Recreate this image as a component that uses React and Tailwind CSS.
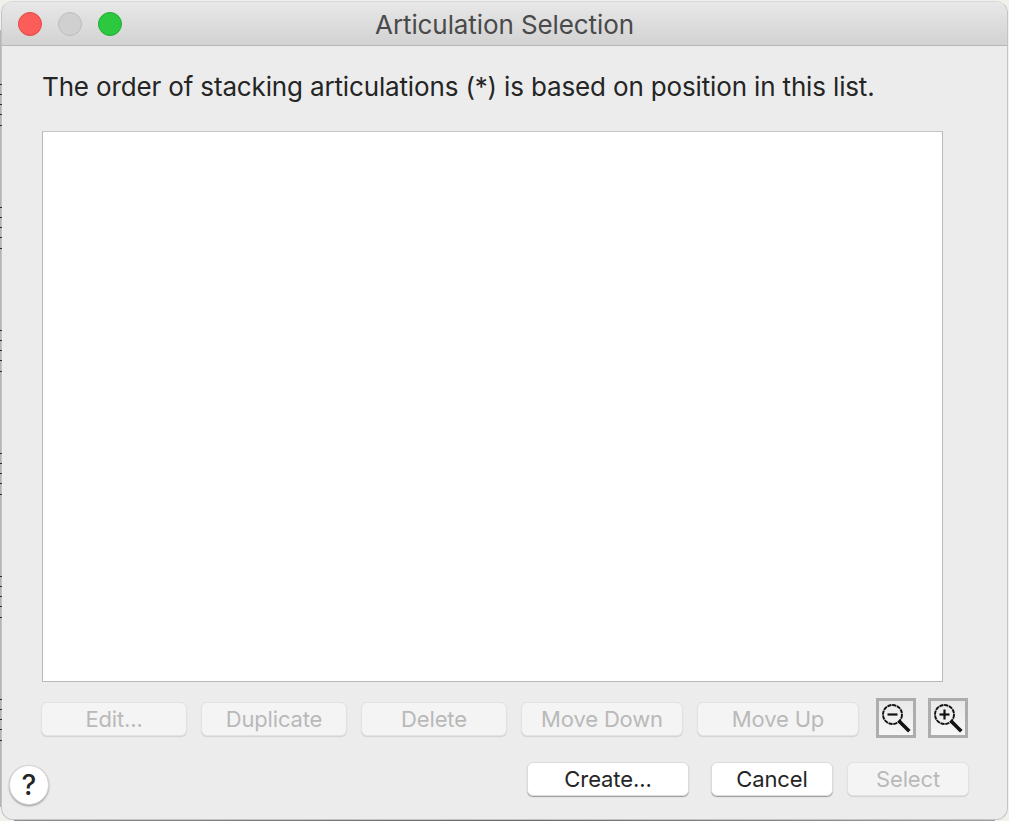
import React from 'react';

const font = "font-['Inter','Liberation_Sans',sans-serif]";

// bits of the desktop peeking out along the left edge of the window
const tickGroups = [84, 207, 330, 453, 576, 699];
const tickOffsets = [0, 10, 20, 30, 41];

const ZoomIcon = ({ plus }) => (
  <svg width="32" height="32" viewBox="0 0 32 32" fill="none">
    <circle cx="12.5" cy="12.5" r="9.5" stroke="#111" strokeWidth="1.9" strokeDasharray="4.2 0.7" />
    <path d="M7.5 12.5h10" stroke="#111" strokeWidth="2.2" />
    {plus && <path d="M12.5 7.5v10" stroke="#111" strokeWidth="2.2" />}
    <path d="M20 20l8 8" stroke="#111" strokeWidth="3.6" strokeLinecap="square" />
  </svg>
);

const Btn = ({ children, w, disabled }) => (
  <button
    className={
      disabled
        ? `${w} h-[34px] rounded-[6px] bg-[#f4f4f4] border border-[#e2e2e2] shadow-[0_1px_1px_rgba(0,0,0,0.12)] text-[22px] leading-none text-[#b9b9b9] tracking-[-0.15px]`
        : `${w} h-[34px] rounded-[6px] bg-white border border-[#dcdcdc] shadow-[0_1px_1px_rgba(0,0,0,0.35)] text-[22px] leading-none text-[#252525] tracking-[-0.1px]`
    }
  >
    {children}
  </button>
);

const ZoomBtn = ({ plus }) => (
  <button className="w-[40px] h-[40px] border-[3px] border-[#adadad] bg-gradient-to-b from-[#e9e9e9] to-[#f6f6f6] flex items-center justify-center">
    <ZoomIcon plus={plus} />
  </button>
);

export default function App() {
  return (
    <div className={`relative w-[1009px] h-[821px] bg-[#f1f1ec] p-px overflow-hidden ${font}`}>
      <div className="h-[819px] w-[1007px] rounded-[12px] overflow-hidden bg-[#ececec] border border-[#c4c4c4] border-t-[#d8d8d8] flex flex-col">
        {/* title bar */}
        <div className="relative h-[44px] shrink-0 pt-[3px] bg-gradient-to-b from-[#e8e8e8] to-[#d2d2d2] border-b border-[#b7b7b7] flex items-center justify-center">
          <div className="absolute left-[16px] top-[10px] flex gap-[16px]">
            <span className="w-[24px] h-[24px] rounded-full bg-[#fc5c5a] border border-[#e14942]" />
            <span className="w-[24px] h-[24px] rounded-full bg-[#d0d0d0] border border-[#bcbcbc]" />
            <span className="w-[24px] h-[24px] rounded-full bg-[#2bc840] border border-[#22ab32]" />
          </div>
          <span className="text-[26px] leading-none tracking-[-0.1px] text-[#4a4a4a]">Articulation Selection</span>
        </div>

        <div className="flex-1 flex flex-col pl-[40px] pr-[39px]">
          <p className="mt-[26px] h-[30px] text-[26px] leading-[30px] tracking-[-0.15px] text-[#252525] whitespace-nowrap">
            The order of stacking articulations (*) is based on position in this list.
          </p>
          <div className="mt-[29px] w-[901px] h-[551px] bg-white border border-[#b9b9b9] border-t-[#c4c4c4]" />

          <div className="mt-[16px] flex items-start -ml-px">
            <div className="flex gap-[14px] mt-[4px]">
              <Btn w="w-[146px]" disabled>Edit...</Btn>
              <Btn w="w-[146px]" disabled>Duplicate</Btn>
              <Btn w="w-[146px]" disabled>Delete</Btn>
              <Btn w="w-[162px]" disabled>Move Down</Btn>
              <Btn w="w-[162px]" disabled>Move Up</Btn>
            </div>
            <div className="flex gap-[12px] ml-[17px]">
              <ZoomBtn />
              <ZoomBtn plus />
            </div>
          </div>

          <div className="mt-[24px] flex items-start -ml-[33px]">
            <button className="shrink-0 w-[40px] h-[40px] mt-[3px] rounded-full bg-white border border-[#d4d4d4] shadow-[0_1px_2px_rgba(0,0,0,0.35)] text-[28px] font-medium leading-none text-[#252525]">?</button>
            <div className="shrink-0 ml-[478px] flex">
              <Btn w="w-[162px]">Create...</Btn>
              <div className="w-[22px]" />
              <Btn w="w-[122px]">Cancel</Btn>
              <div className="w-[14px]" />
              <Btn w="w-[122px]" disabled>Select</Btn>
            </div>
          </div>
        </div>
      </div>

      {/* desktop showing behind the window */}
      <div className="absolute left-0 top-[30px] bottom-[14px] w-px bg-[#b5b5ae]" />
      {tickGroups.flatMap((y) =>
        tickOffsets.map((o) => (
          <div key={y + o} className="absolute left-0 w-[2px] h-px bg-[#2a2a2a]" style={{ top: y + o }} />
        ))
      )}
      <div className="absolute left-[14px] right-[14px] bottom-0 h-px bg-gradient-to-r from-[#8f8f8f] via-[#6a6a6a] to-[#a0a0a0]" />
    </div>
  );
}
